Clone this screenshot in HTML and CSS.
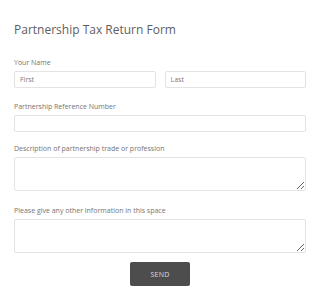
FILE: index.html
```html
<!DOCTYPE html>
<html>
<head>
<meta charset="utf-8">
<link rel="stylesheet" href="styles.css">
</head>
<body>
<form class="form">
  <h1 class="title">Partnership Tax Return Form</h1>
  <div class="field">
    <label class="label">Your Name</label>
    <div class="row">
      <input class="input half" type="text" placeholder="First">
      <input class="input half" type="text" placeholder="Last">
    </div>
  </div>
  <div class="field tight">
    <label class="label">Partnership Reference Number</label>
    <input class="input" type="text">
  </div>
  <div class="field loose">
    <label class="label">Description of partnership trade or profession</label>
    <textarea class="area"></textarea>
  </div>
  <div class="field last">
    <label class="label">Please give any other information in this space</label>
    <textarea class="area"></textarea>
  </div>
  <div class="actions">
    <button class="send" type="button">SEND</button>
  </div>
</form>
</body>
</html>
```
FILE: styles.css
```css
html, body {
  margin: 0;
  padding: 0;
  background: #fff;
}
body {
  font-family: "Open Sans", "Liberation Sans", sans-serif;
  color: #555;
}
.form {
  padding: 20px 14px 0 14px;
  display: flex;
  flex-direction: column;
}
.title {
  margin: 0 0 18px 0;
  font-size: 12px;
  font-weight: 400;
  line-height: 20px;
  color: #5e5e5e;
}
.field {
  display: flex;
  flex-direction: column;
  margin-bottom: 14px;
}
.field.tight {
  margin-bottom: 12px;
}
.field.loose {
  margin-bottom: 15px;
}
.field.last {
  margin-bottom: 9px;
}
.label {
  font-size: 7px;
  line-height: 10px;
  color: #747474;
  margin-bottom: 3px;
}
.row {
  display: flex;
  gap: 9px;
}
.input {
  box-sizing: border-box;
  height: 17px;
  flex: none;
  border: 1px solid #e3e3e3;
  border-radius: 2px;
  padding: 0 5px;
  font-family: inherit;
  font-size: 7px;
  color: #555;
  background: #fff;
  outline: none;
  margin: 0;
}
.input.half {
  flex: 1;
  min-width: 0;
}
.input::placeholder {
  color: #7a7a7a;
}
.area {
  box-sizing: border-box;
  height: 34px;
  flex: none;
  border: 1px solid #e3e3e3;
  border-radius: 2px;
  margin: 0;
  padding: 4px;
  font-family: inherit;
  font-size: 7px;
  background: #fff;
  outline: none;
}
.actions {
  display: flex;
  justify-content: center;
}
.send {
  width: 60px;
  height: 24px;
  border: none;
  border-radius: 2px;
  background: #4d4d4d;
  color: #ddd;
  font-family: inherit;
  font-size: 7px;
  letter-spacing: 0.2px;
  padding: 0;
}
```
